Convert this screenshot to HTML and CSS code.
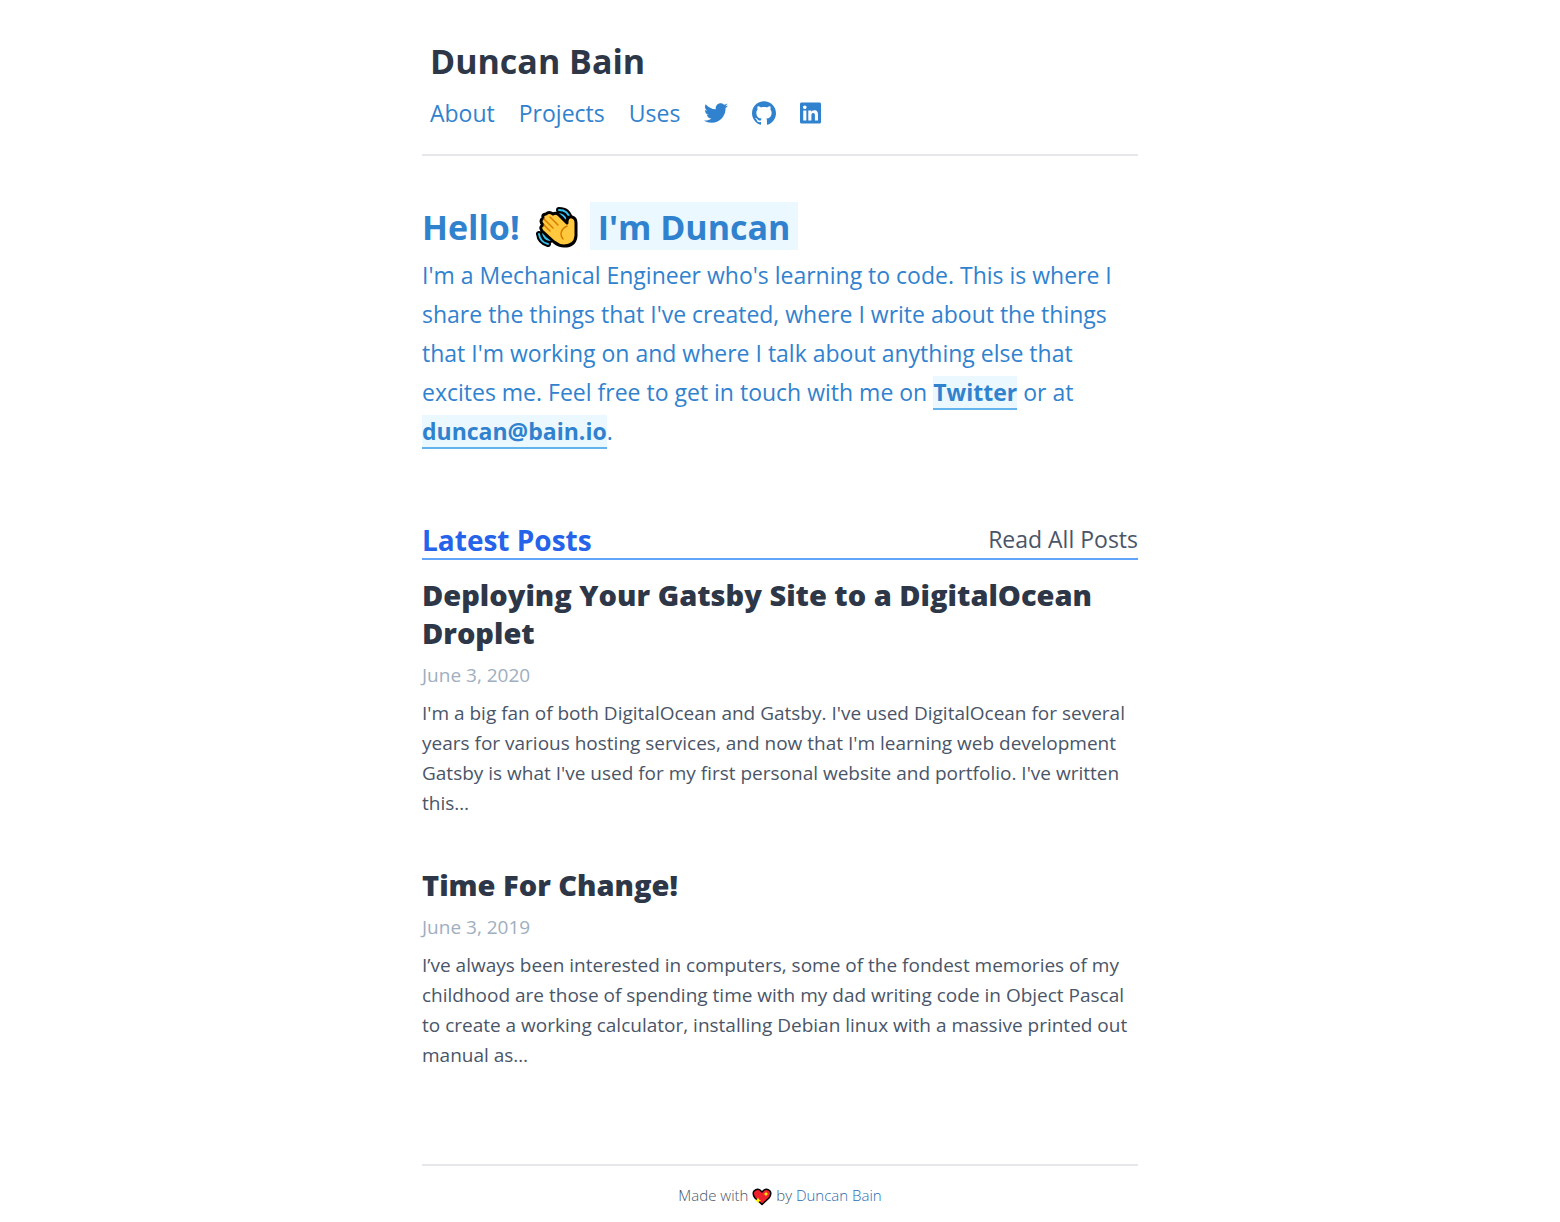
FILE: index.html
```html
<!DOCTYPE html>
<html lang="en">
<head>
<meta charset="utf-8">
<meta name="viewport" content="width=device-width, initial-scale=1">
<title>Duncan Bain</title>
<link rel="stylesheet" href="styles.css">
</head>
<body>
<div class="page">
  <header class="site-header">
    <a class="site-title" href="#">Duncan Bain</a>
    <nav class="site-nav">
      <a href="#">About</a>
      <a href="#">Projects</a>
      <a href="#">Uses</a>
      <a class="social" href="#" aria-label="Twitter"><svg viewBox="0 0 512 512" width="24" height="24" fill="currentColor"><path d="M459.37 151.716c.325 4.548.325 9.097.325 13.645 0 138.72-105.583 298.558-298.558 298.558-59.452 0-114.68-17.219-161.137-47.106 8.447.974 16.568 1.299 25.34 1.299 49.055 0 94.213-16.568 130.274-44.832-46.132-.975-84.792-31.188-98.112-72.772 6.498.974 12.995 1.624 19.818 1.624 9.421 0 18.843-1.3 27.614-3.573-48.081-9.747-84.143-51.98-84.143-102.985v-1.299c13.969 7.797 30.214 12.67 47.431 13.319-28.264-18.843-46.781-51.005-46.781-87.391 0-19.492 5.197-37.36 14.294-52.954 51.655 63.675 129.3 105.258 216.365 109.807-1.624-7.797-2.599-15.918-2.599-24.04 0-57.828 46.782-104.934 104.934-104.934 30.213 0 57.502 12.67 76.67 33.137 23.715-4.548 46.456-13.32 66.599-25.34-7.798 24.366-24.366 44.833-46.132 57.827 21.117-2.273 41.584-8.122 60.426-16.243-14.292 20.791-32.161 39.308-52.628 54.253z"/></svg></a>
      <a class="social" href="#" aria-label="GitHub"><svg viewBox="0 0 24 24" width="24" height="24" fill="currentColor"><path d="M12 .297c-6.63 0-12 5.373-12 12 0 5.303 3.438 9.8 8.205 11.385.6.113.82-.258.82-.577 0-.285-.01-1.04-.015-2.04-3.338.724-4.042-1.61-4.042-1.61C4.422 18.07 3.633 17.7 3.633 17.7c-1.087-.744.084-.729.084-.729 1.205.084 1.838 1.236 1.838 1.236 1.07 1.835 2.809 1.305 3.495.998.108-.776.417-1.305.76-1.605-2.665-.3-5.466-1.332-5.466-5.93 0-1.31.465-2.38 1.235-3.22-.135-.303-.54-1.523.105-3.176 0 0 1.005-.322 3.3 1.23.96-.267 1.98-.399 3-.405 1.02.006 2.04.138 3 .405 2.28-1.552 3.285-1.23 3.285-1.23.645 1.653.24 2.873.12 3.176.765.84 1.23 1.91 1.23 3.22 0 4.61-2.805 5.625-5.475 5.92.42.36.81 1.096.81 2.22 0 1.606-.015 2.896-.015 3.286 0 .315.21.69.825.57C20.565 22.092 24 17.592 24 12.297c0-6.627-5.373-12-12-12"/></svg></a>
      <a class="social" href="#" aria-label="LinkedIn"><svg viewBox="0 0 448 512" width="21" height="24" fill="currentColor"><path d="M416 32H31.9C14.3 32 0 46.5 0 64.3v383.4C0 465.5 14.3 480 31.9 480H416c17.6 0 32-14.5 32-32.3V64.3c0-17.8-14.4-32.3-32-32.3zM135.4 416H69V202.2h66.5V416zm-33.2-243c-21.3 0-38.5-17.3-38.5-38.5S80.9 96 102.2 96c21.2 0 38.5 17.3 38.5 38.5 0 21.3-17.2 38.5-38.5 38.5zm282.1 243h-66.4V312c0-24.8-.5-56.7-34.5-56.7-34.6 0-39.9 27-39.9 54.9V416h-66.4V202.2h63.7v29.2h.9c8.9-16.8 30.6-34.5 62.9-34.5 67.2 0 79.7 44.3 79.7 101.9V416z"/></svg></a>
    </nav>
  </header>
  <main>
    <section class="intro">
      <h1>Hello!
        <svg class="wave" viewBox="0 0 42 42" role="img" aria-label="waving hand">
          <g fill="none" stroke-linecap="round">
            <path d="M23 4Q32 4 34 13M23 8Q29 8 30 14M3 28Q4 36 12 38M7 27Q8 33 14 34" stroke="#000" stroke-width="6"/>
            <path d="M23 4Q32 4 34 13M22 8Q28 8 30 14M3 28Q4 36 12 38M7 27Q8 33 14 34" stroke="#35c1f1" stroke-width="2"/>
          </g>
          <path d="M7 19Q3 15 7 12Q6 8 10 8Q13 5 17 8Q20 6 23 9L31 17V15Q32 10 36 11Q40 12 40 17V30Q39 40 28 40Q23 40 18 36L6 25Q3 21 7 19Z" fill="#ffc83d" stroke="#000" stroke-width="3" stroke-linejoin="round"/>
          <path d="M8 19L14 25M8 13L17 22M14 11L22 19M31 20Q25 23 25 28Q25 31 27 33" fill="none" stroke="#d67d00" stroke-width="1.500" stroke-linecap="round"/>
        </svg>
        <span class="name">I'm Duncan</span></h1>
      <p>I'm a Mechanical Engineer who's learning to code. This is where I share the things that I've created, where I write about the things that I'm working on and where I talk about anything else that excites me. Feel free to get in touch with me on <a href="#">Twitter</a> or at <a href="#">duncan@bain.io</a>.</p>
    </section>
    <section class="posts">
      <div class="posts-head">
        <h2>Latest Posts</h2>
        <a href="#">Read All Posts</a>
      </div>
      <article>
        <h3><a href="#">Deploying Your Gatsby Site to a DigitalOcean Droplet</a></h3>
        <time datetime="2020-06-03">June 3, 2020</time>
        <p>I'm a big fan of both DigitalOcean and Gatsby. I've used DigitalOcean for several years for various hosting services, and now that I'm learning web development Gatsby is what I've used for my first personal website and portfolio. I've written this…</p>
      </article>
      <article>
        <h3><a href="#">Time For Change!</a></h3>
        <time datetime="2019-06-03">June 3, 2019</time>
        <p>I’ve always been interested in computers, some of the fondest memories of my childhood are those of spending time with my dad writing code in Object Pascal to create a working calculator, installing Debian linux with a massive printed out manual as…</p>
      </article>
    </section>
  </main>
  <footer class="site-footer">
    <span>Made with
      <svg class="heart" viewBox="0 0 20 18" role="img" aria-label="sparkling heart"><path d="M10 16.500L3 10Q0 6 2 3Q5 0 8 2L10 4L12 2Q15 0 18 3Q20 6 17 10Z" fill="#f01f2e" stroke="#000" stroke-width="1.500" stroke-linejoin="round"/><path d="M14 3.500l.8 1.700 1.700.8-1.700.8-.8 1.700-.8-1.700-1.700-.8 1.700-.8zM6 9.500l1 2 2 1-2 1-1 2-1-2-2-1 2-1z" fill="#fff100"/></svg>
      by <a href="#">Duncan Bain</a></span>
  </footer>
</div>
</body>
</html>
```
FILE: styles.css
```css
* { box-sizing: border-box; }
body {
  margin: 0;
  background: #fff;
  color: #4a5568;
  font-family: "Open Sans", "Noto Sans", sans-serif;
}
h1, h2, h3, p { margin: 0; }
a { color: inherit; text-decoration: none; }
svg { display: block; }

.page {
  max-width: 748px;
  margin: 0 auto;
  padding: 32px 16px 16px;
}

.site-header {
  padding: 0 8px 18px;
  border-bottom: 2px solid #e5e7eb;
}
.site-title {
  display: block;
  color: #2d3748;
  font-size: 34px;
  font-weight: 700;
  line-height: 58px;
}
.site-nav {
  display: flex;
  flex-wrap: wrap;
  align-items: center;
  gap: 0 24px;
  color: #3182ce;
  font-size: 23px;
  line-height: 46px;
}

.intro {
  padding-top: 45px;
  color: #3182ce;
}
.intro h1 {
  display: flex;
  flex-wrap: wrap;
  align-items: baseline;
  gap: 0 12px;
  font-size: 34px;
  line-height: 52px;
}
.wave {
  align-self: center;
  width: 42px;
  height: 42px;
  margin-left: 4px;
}
.name {
  padding: 3px 8px 0;
  background: #ebf8ff;
  line-height: 45px;
}
.intro p {
  padding-top: 3px;
  font-size: 23px;
  line-height: 39px;
}
.intro p a {
  border-bottom: 2px solid #63b3ed;
  background: #ebf8ff;
  font-weight: 700;
}

.posts { padding-top: 72px; }
.posts-head {
  display: flex;
  align-items: flex-start;
  justify-content: space-between;
  margin-bottom: 16px;
  border-bottom: 2px solid #60a5fa;
}
.posts-head h2 {
  color: #2563eb;
  font-size: 28px;
  line-height: 35px;
}
.posts-head a { font-size: 23px; line-height: 32px; }

article { padding-bottom: 48px; }
article h3 {
  color: #2d3748;
  font-size: 29px;
  font-weight: 800;
  line-height: 38px;
}
time {
  display: block;
  padding: 8px 0;
  color: #a0aec0;
  font-size: 19px;
  line-height: 30px;
}
article p { font-size: 19px; line-height: 30px; }

.site-footer {
  margin-top: 46px;
  padding-top: 16px;
  border-top: 2px solid #e5e7eb;
  font-size: 15px;
  font-weight: 300;
  line-height: 26px;
  text-align: center;
}
.site-footer a { color: #2b6cb0; }
.heart { display: inline-block; width: 20px; height: 18px; vertical-align: middle; }
```
